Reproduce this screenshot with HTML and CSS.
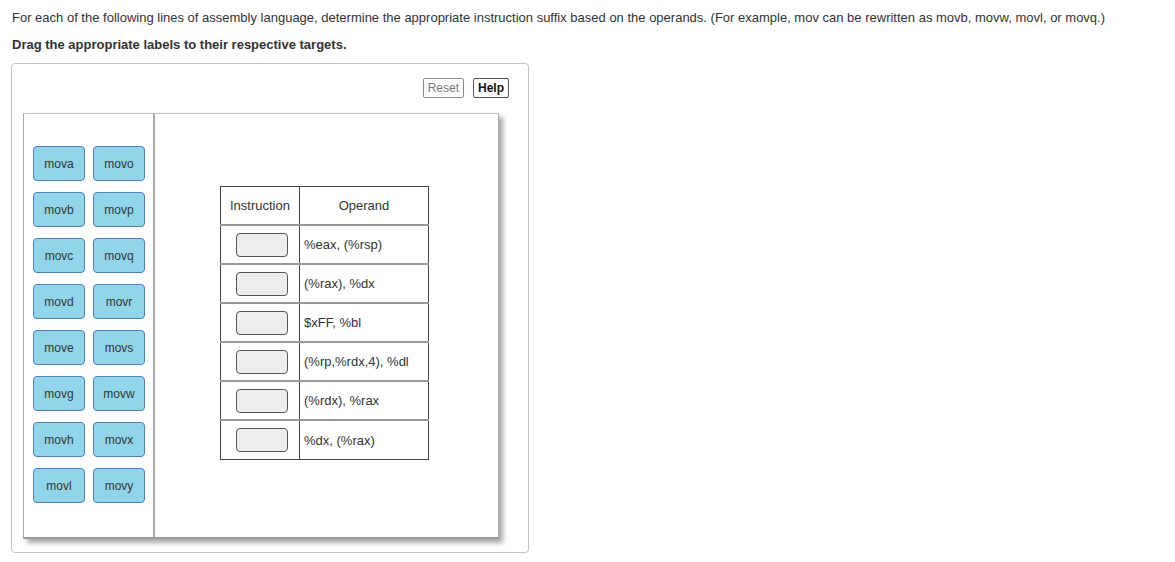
FILE: index.html
```html
<!DOCTYPE html>
<html lang="en">
<head>
    <meta charset="UTF-8" />
    <title>Instruction suffix</title>
    <link rel="stylesheet" href="styles.css">
</head>
<body>

<p class="prompt">For each of the following lines of assembly language, determine the appropriate instruction suffix based on the operands. (For example, mov can be rewritten as movb, movw, movl, or movq.)</p>
<p class="instr">Drag the appropriate labels to their respective targets.</p>

<div class="panel">
    <div class="toolbar">
        <button class="tool-btn reset">Reset</button>
        <button class="tool-btn help">Help</button>
    </div>

    <div class="canvas">
        <!-- etiquetas para arrastrar -->
        <div class="labels">
            <div class="label">mova</div><div class="label">movo</div>
            <div class="label">movb</div><div class="label">movp</div>
            <div class="label">movc</div><div class="label">movq</div>
            <div class="label">movd</div><div class="label">movr</div>
            <div class="label">move</div><div class="label">movs</div>
            <div class="label">movg</div><div class="label">movw</div>
            <div class="label">movh</div><div class="label">movx</div>
            <div class="label">movl</div><div class="label">movy</div>
        </div>

        <div class="board">
            <table class="ops">
                <tr><th>Instruction</th><th>Operand</th></tr>
                <tr><td class="slot"><div class="target"></div></td><td>%eax, (%rsp)</td></tr>
                <tr><td class="slot"><div class="target"></div></td><td>(%rax), %dx</td></tr>
                <tr><td class="slot"><div class="target"></div></td><td>$xFF, %bl</td></tr>
                <tr><td class="slot"><div class="target"></div></td><td>(%rp,%rdx,4), %dl</td></tr>
                <tr><td class="slot"><div class="target"></div></td><td>(%rdx), %rax</td></tr>
                <tr><td class="slot"><div class="target"></div></td><td>%dx, (%rax)</td></tr>
            </table>
        </div>
    </div>
</div>

</body>
</html>
```

FILE: styles.css
```css
body {
    margin: 0;
    font-family: "Liberation Sans", Arial, sans-serif;
    font-size: 13px;
    color: #333;
    background-color: #fff;
}

.prompt {
    margin: 10px 0 0 12px;
    line-height: 15px;
}

.instr {
    margin: 12px 0 0 12px;
    line-height: 15px;
    font-weight: bold;
}

.panel {
    margin: 11px 0 0 11px;
    width: 516px;
    height: 488px;
    border: 1px solid #c4c4c4;
    border-radius: 4px;
}

.toolbar {
    display: flex;
    justify-content: flex-end;
    gap: 9px;
    padding: 14px 19px 0 0;
    height: 20px;
}

.tool-btn {
    font-family: "Liberation Sans", Arial, sans-serif;
    font-size: 12px;
    height: 20px;
    padding: 0 4px;
    background-color: #fff;
    border: 1px solid #555;
    border-radius: 2px;
}

.reset {
    color: #777;
    border-color: #888;
}

.help {
    color: #111;
    font-weight: bold;
}

/* area de trabajo */
.canvas {
    display: flex;
    margin: 15px 0 0 11px;
    width: 474px;
    height: 423px;
    border-top: 1px solid #c0c0c0;
    border-left: 1px solid #aaa;
    border-bottom: 2px solid #999;
    border-right: 1px solid #aaa;
    box-shadow: 4px 4px 5px rgba(0, 0, 0, 0.35);
}

.labels {
    width: 120px;
    padding: 32px 0 0 9px;
    border-right: 2px solid #a8a8a8;
    display: grid;
    grid-template-columns: 52px 52px;
    grid-auto-rows: 35px;
    column-gap: 8px;
    row-gap: 11px;
    align-content: start;
}

.label {
    background-color: #91d5ea;
    border: 1px solid #4f7fc3;
    border-radius: 4px;
    display: flex;
    align-items: center;
    justify-content: center;
    font-size: 12px;
    color: #333;
}

.board {
    flex: 1;
    padding: 72px 0 0 65px;
}

.ops {
    border-collapse: collapse;
    font-size: 13px;
    color: #333;
}

.ops th, .ops td {
    border: 1px solid #444;
    height: 37px;
    padding: 0 4px;
}

.ops tr + tr td {
    border-top: 2px solid #999;
}

.ops th {
    font-weight: normal;
    width: 70px;
}

.ops th + th {
    width: 120px;
}

.ops tr:last-child td {
    height: 38px;
}

.slot {
    padding: 0;
}

.target {
    width: 50px;
    height: 22px;
    margin: 0 7px 0 auto;
    background-color: #eeeeee;
    border: 1px solid #555;
    border-radius: 4px;
}
```
